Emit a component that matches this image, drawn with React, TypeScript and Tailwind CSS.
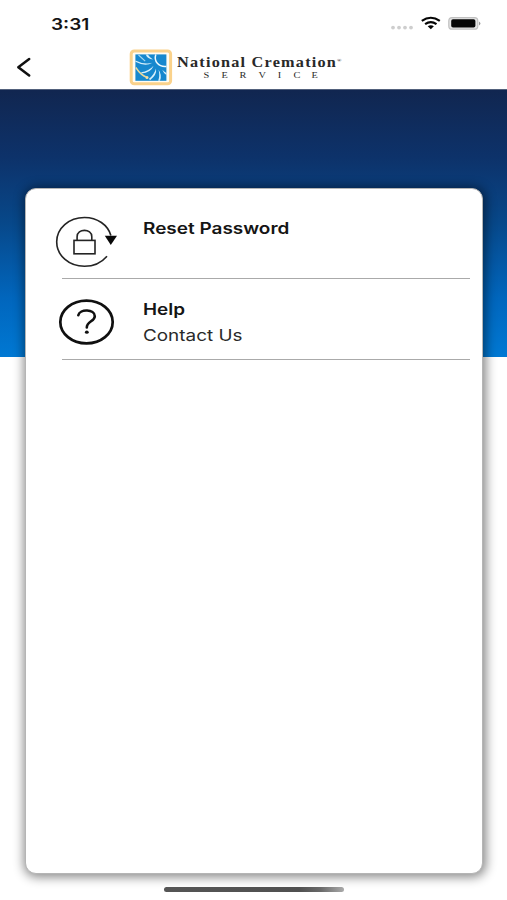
function StatusBar() {
  return (
    <div className="flex h-[46px] items-start justify-between pl-[51px] pr-[26px]">
      <span className="mt-[14px] origin-left scale-x-[1.19] text-[16px] font-semibold leading-[20px] text-[#151515]">3:31</span>
      <svg className="mt-[15px]" width="91" height="18" viewBox="390 15 91 18" fill="none" aria-hidden="true">
        <g fill="#cecece">
          <circle cx="393" cy="27.6" r="1.9" />
          <circle cx="399" cy="27.6" r="1.9" />
          <circle cx="405" cy="27.6" r="1.9" />
          <circle cx="411" cy="27.6" r="1.9" />
        </g>
        <g stroke="#050505" strokeWidth="2.2">
          <path d="M421.8 20.9Q430.8 14.6 439.8 20.9" />
          <path d="M425.1 24.1Q430.8 20.1 436.5 24.1" />
        </g>
        <path d="M427.7 26.2Q430.8 24.2 433.9 26.2L430.8 29.2Z" fill="#050505" />
        <rect x="448.8" y="17.6" width="29" height="11.6" rx="3.3" fill="#e4e4e4" stroke="#c0c0c0" strokeWidth="1.2" />
        <rect x="451.2" y="19.3" width="24.2" height="8.2" rx="1.8" fill="#050505" />
        <path d="M479 21.4Q481.8 23.4 479 25.4Z" fill="#999" />
      </svg>
    </div>
  )
}

function Logo() {
  return (
    <div className="flex items-start">
      <svg width="44" height="37" viewBox="129 49 44 37" fill="none" aria-hidden="true">
        <rect x="131.2" y="51" width="39.4" height="32.8" rx="3" fill="#fffdf4" stroke="#fad28b" strokeWidth="3" />
        <rect x="135.4" y="54.4" width="31" height="26.4" fill="#1688ce" />
        <path d="M155.8 54.4C153.6 61.2 158.6 67.2 166.4 66.4" stroke="#eefaff" strokeWidth="1.5" />
        <g fill="#d6effb">
          <path d="M145.6 54.4L147.8 54.4Q149.8 57.5 153 59.6Q147.6 58.9 145.6 54.4Z" />
          <path d="M135.4 60.4Q143.8 64.8 152.4 62.8Q145.2 67 135.4 61.8Z" />
          <path d="M141.3 72.2Q148.8 71 153.6 65.7Q151 72.6 141.3 73.6Z" />
          <path d="M149 78.8Q154.3 74.6 156 68.5Q157.2 74.7 150 80.2Z" />
          <path d="M158.2 80.8Q160 75.8 158.6 69.7Q162.3 75 160 80.8Z" />
          <path d="M166.4 75Q163.7 73.6 162.3 69.8Q164 71.8 166.4 73Z" />
        </g>
        <path d="M138.5 55L145.2 61.2" stroke="#a9d9f1" strokeWidth="1.1" />
        <path d="M135.8 67.5C138.6 71.8 141.4 75.8 147.2 77.4" stroke="#e9d99c" strokeWidth="1.4" />
        <circle cx="147" cy="77.4" r="1.5" fill="#f7dea0" />
      </svg>
      <div className="ml-[4px] flex w-[168px] flex-col pt-[4px] font-['Liberation_Serif',serif] text-[#292929]">
        <span className="flex h-[18px] origin-left scale-x-[1.16] whitespace-nowrap text-[14px] font-semibold leading-[19px] tracking-[1.05px]">
          National Cremation<span className="text-[5px] leading-[15px] tracking-normal">®</span>
        </span>
        <span className="ml-[27px] flex h-[9px] w-[114px] justify-between self-start text-[9px] leading-[9px]">
          {'SERVICE'.split('').map((letter, index) => (
            <span key={index} className="scale-x-[1.15]">{letter}</span>
          ))}
        </span>
      </div>
    </div>
  )
}

function ResetIcon() {
  return (
    <svg width="64" height="54" viewBox="55 215 64 54" fill="none" stroke="#242424" aria-hidden="true">
      <path d="M110.9 235.5C107.8 224.8 97.4 217.5 84.5 217.5C68.8 217.5 56.7 228.2 56.7 241.8C56.7 255.5 68.8 266.3 84.5 266.3C93.6 266.3 101.5 262.6 107 256.2" strokeWidth="1.6" />
      <path d="M104.8 235.8H117L110.8 245Z" fill="#080808" stroke="none" />
      <rect x="74" y="240.4" width="21" height="13.4" strokeWidth="1.6" />
      <path d="M77.1 240V236.7C77.1 228.3 91.8 228.3 91.8 236.7V240" strokeWidth="1.6" />
    </svg>
  )
}

function HelpIcon() {
  return (
    <svg width="64" height="50" viewBox="55 297 64 50" fill="none" stroke="#101010" aria-hidden="true">
      <ellipse cx="86.5" cy="322" rx="26.2" ry="21.4" strokeWidth="2.7" />
      <path d="M78.3 315.2C79.7 308.6 94.8 309 94.8 316.2C94.8 321.3 86.8 321.4 86.8 327.4" strokeWidth="2.6" strokeLinecap="round" />
      <ellipse cx="86.8" cy="332.2" rx="1.9" ry="1.6" fill="#101010" stroke="none" />
    </svg>
  )
}

export default function App() {
  return (
    <div className="flex h-[900px] w-[507px] flex-col overflow-hidden bg-white font-[Inter,sans-serif]">
      <header className="h-[89px] shrink-0">
        <StatusBar />
        <div className="flex items-start">
          <button aria-label="Back" className="ml-[15px] mt-[10px] h-[22px] w-[18px]">
            <svg width="18" height="22" viewBox="15 56 18 22" fill="none">
              <path d="M29.2 59L18.3 67.2L29.2 75.5" stroke="#101010" strokeWidth="2.5" strokeLinecap="round" strokeLinejoin="round" />
            </svg>
          </button>
          <div className="ml-[96px] mt-[3px]"><Logo /></div>
        </div>
      </header>
      <main className="flex flex-1 flex-col border-t border-[#52617c] bg-[linear-gradient(#112650,#0d326a_25%,#07488a_50%,#0166bd_78%,#0078d3)] bg-[length:100%_267px] bg-no-repeat pl-[25px] pr-[24px] pt-[98px]">
        <section className="h-[686px] rounded-[11px] border border-[#b5b5b5] bg-white pl-[29px] pr-[12px] shadow-[1px_1px_11px_2px_rgba(0,0,0,0.48)]">
          <div className="flex h-[89px] pt-[26px]">
            <ResetIcon />
            <h2 className="ml-[24px] mt-[2px] h-[22px] origin-left scale-x-[1.185] whitespace-nowrap text-[16px] font-semibold leading-[22px] text-[#151515]">Reset Password</h2>
          </div>
          <hr className="ml-[7px] border-[#aaaaaa]" />
          <div className="flex h-[80px] pt-[18px]">
            <HelpIcon />
            <div className="ml-[24px] flex origin-left scale-x-[1.18] flex-col whitespace-nowrap text-[#151515]">
              <h2 className="text-[16px] font-semibold leading-[24px]">Help</h2>
              <p className="mt-[2px] text-[16px] leading-[24px] text-[#292929]">Contact Us</p>
            </div>
          </div>
          <hr className="ml-[7px] border-[#aaaaaa]" />
        </section>
        <div className="ml-[139px] mt-[13px] h-[5px] w-[180px] rounded-full bg-[linear-gradient(90deg,#555,#505050_75%,#696969_87%,#aaa)]" />
      </main>
    </div>
  )
}
